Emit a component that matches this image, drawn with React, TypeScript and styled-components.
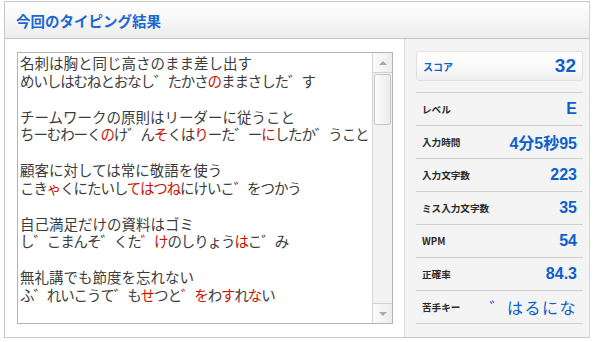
import styled, { createGlobalStyle } from "styled-components";

const GlobalStyle = createGlobalStyle`
  body {
    margin: 0;
    background: #ffffff;
    font-family: "Noto Sans CJK JP", "Liberation Sans", sans-serif;
  }
`;

// 例文とかな入力を交互に並べる（空行で区切り）
const TYPED_LINES = [
  "名刺は胸と同じ高さのまま差し出す",
  "めいしはむねとおなし゛たかさ{の}ままさした゛す",
  "",
  "チームワークの原則はリーダーに従うこと",
  "ちーむわーく{の}け゛ん{そ}くは{り}ーた゛ー{に}したか゛うこと",
  "",
  "顧客に対しては常に敬語を使う",
  "こき{ゃ}くにたいし{てはつね}にけいこ゛をつかう",
  "",
  "自己満足だけの資料はゴミ",
  "し゛こまんそ゛くた{゛け}のしりょう{は}こ゛み",
  "",
  "無礼講でも節度を忘れない",
  "ふ゛れいこうて゛も{せ}つと{゛を}わ{す}れ{な}い",
];

const STATS = [
  { label: "レベル", value: "E" },
  { label: "入力時間", value: "4分5秒95" },
  { label: "入力文字数", value: "223" },
  { label: "ミス入力文字数", value: "35" },
  { label: "WPM", value: "54" },
  { label: "正確率", value: "84.3" },
  { label: "苦手キー", value: "゛はるにな", $soft: true },
];

// {...} で囲んだ部分をミス表示にする
function parseLine(line: string) {
  const parts: { text: string; miss: boolean }[] = [];
  const re = /\{([^}]*)\}|([^{]+)/g;
  let m: RegExpExecArray | null;
  while ((m = re.exec(line))) {
    if (m[1] !== undefined) parts.push({ text: m[1], miss: true });
    else parts.push({ text: m[2], miss: false });
  }
  return parts;
}

function App() {
  return (
    <>
      <GlobalStyle />
      <Panel>
        <Header>
          <Title>今回のタイピング結果</Title>
        </Header>
        <Body>
          <LeftPane>
            <TextBox>
              <TextArea>
                {TYPED_LINES.map((line, i) => (
                  <Line key={i} $kana={i % 3 === 1}>
                    {line === ""
                      ? "\u00a0"
                      : parseLine(line).map((p, j) =>
                          p.miss ? <Miss key={j}>{p.text}</Miss> : <span key={j}>{p.text}</span>
                        )}
                  </Line>
                ))}
              </TextArea>
              <ScrollBar>
                <ArrowButton $dir="up" />
                <Thumb />
                <Track />
                <ArrowButton $dir="down" />
              </ScrollBar>
            </TextBox>
          </LeftPane>
          <RightPane>
            <ScoreBox>
              <ScoreLabel>スコア</ScoreLabel>
              <ScoreValue>32</ScoreValue>
            </ScoreBox>
            <StatList>
              {STATS.map((s) => (
                <StatRow key={s.label}>
                  <StatLabel>{s.label}</StatLabel>
                  <StatValue $soft={!!s.$soft}>{s.value}</StatValue>
                </StatRow>
              ))}
            </StatList>
          </RightPane>
        </Body>
      </Panel>
    </>
  );
}

export default App;

const Panel = styled.div`
  width: 584px;
  margin: 1px 0 0 4px;
  border: 1px solid #c8c8c8;
  border-right-color: #d4d4d4;
`;

const Header = styled.div`
  display: flex;
  align-items: center;
  height: 36px;
  padding-left: 11px;
  background: linear-gradient(to bottom, #fefefe 0%, #f7f7f7 50%, #ececec 100%);
  border-bottom: 1px solid #c4c4c4;
`;

const Title = styled.h1`
  margin: 0;
  font-size: 14.5px;
  font-weight: 700;
  color: #1b68cf;
`;

const Body = styled.div`
  display: flex;
  height: 298px;
`;

const LeftPane = styled.div`
  width: 387px;
  padding: 13px 0 0 12px;
  background: #ffffff;
  border-right: 1px solid #dcdcdc;
`;

const TextBox = styled.div`
  display: flex;
  width: 376px;
  height: 272px;
  box-sizing: border-box;
  border: 1px solid #b4b4b4;
  background: #ffffff;
`;

const TextArea = styled.div`
  flex: 1;
  padding: 1px 0 0 2px;
  font-family: "Noto Sans CJK JP", sans-serif;
  font-size: 14.5px;
  line-height: 17.85px;
  color: #3c3c3c;
  white-space: nowrap;
`;

const Line = styled.div<{ $kana: boolean }>`
  height: 17.85px;
  letter-spacing: ${({ $kana }) => ($kana ? "-1.1px" : "0")};
`;

const Miss = styled.span`
  color: #c81400;
`;

const ScrollBar = styled.div`
  display: flex;
  flex-direction: column;
  width: 19px;
  border-left: 1px solid #d6d6d6;
  background: #f2f2f2;
`;

const ArrowButton = styled.div<{ $dir: "up" | "down" }>`
  display: flex;
  justify-content: center;
  align-items: center;
  height: 19px;
  background: linear-gradient(to right, #fafafa, #ececec);
  border-bottom: ${({ $dir }) => ($dir === "up" ? "1px solid #d2d2d2" : "none")};
  border-top: ${({ $dir }) => ($dir === "down" ? "1px solid #d2d2d2" : "none")};

  &::before {
    content: "";
    width: 0;
    height: 0;
    border-left: 4px solid transparent;
    border-right: 4px solid transparent;
    ${({ $dir }) =>
      $dir === "up" ? "border-bottom: 4px solid #a8a8a8;" : "border-top: 4px solid #a8a8a8;"}
  }
`;

const Thumb = styled.div`
  height: 49px;
  margin: 1px 1px 0;
  border: 1px solid #c8c8c8;
  border-radius: 2px;
  background: linear-gradient(to right, #fdfdfd, #ebebeb);
`;

const Track = styled.div`
  flex: 1;
`;

const RightPane = styled.div`
  flex: 1;
  padding: 12px 6px 0 11px;
  background: #f4f4f4;
`;

const ScoreBox = styled.div`
  display: flex;
  align-items: center;
  justify-content: space-between;
  height: 30px;
  box-sizing: border-box;
  padding: 0 6px;
  border: 1px solid #e0e0e0;
  border-radius: 3px;
  background: linear-gradient(to bottom, #ffffff 0%, #f9f9f9 60%, #efefef 100%);
`;

const ScoreLabel = styled.span`
  font-size: 10px;
  font-weight: 700;
  color: #1060cc;
`;

const ScoreValue = styled.span`
  font-family: "Liberation Sans", Arial, sans-serif;
  font-size: 19px;
  font-weight: 700;
  color: #0d5fcd;
`;

const StatList = styled.div`
  margin-top: 11px;
  border-bottom: 1px solid #cfcfcf;
`;

const StatRow = styled.div`
  display: flex;
  align-items: center;
  justify-content: space-between;
  height: 32px;
  padding: 0 6px;
  border-top: 1px solid #cfcfcf;
`;

const StatLabel = styled.span`
  font-size: 9.6px;
  font-weight: 700;
  color: #2a2a2a;
`;

const StatValue = styled.span<{ $soft: boolean }>`
  font-family: "Liberation Sans", Arial, "Noto Sans CJK JP", sans-serif;
  font-size: 16px;
  font-weight: ${({ $soft }) => ($soft ? 400 : 700)};
  letter-spacing: ${({ $soft }) => ($soft ? "1.5px" : "0")};
  color: #0d5fcd;
`;
